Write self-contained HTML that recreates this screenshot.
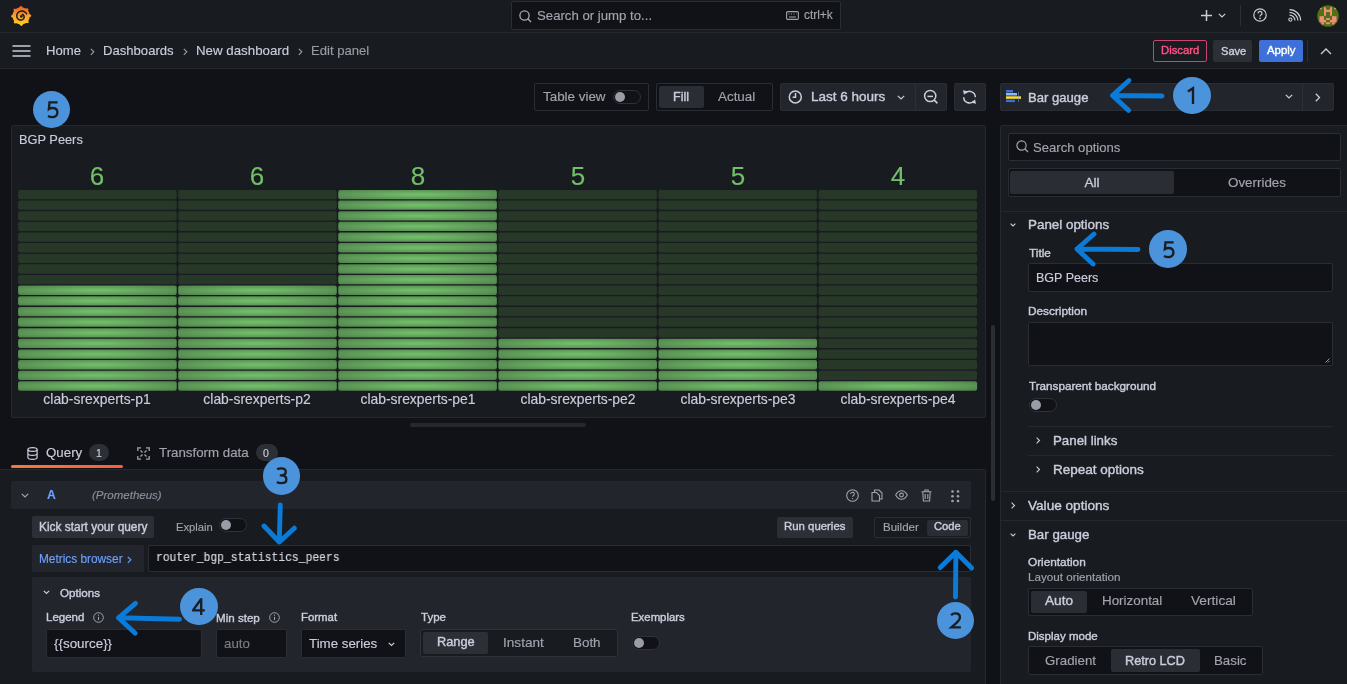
<!DOCTYPE html><html><head><meta charset="utf-8"><style>
*{box-sizing:border-box;margin:0;padding:0}
html,body{width:1347px;height:684px;overflow:hidden;background:#111217;font-family:"Liberation Sans",sans-serif;color:#ccccdc}
.a{position:absolute}
.t{position:absolute;white-space:nowrap;line-height:1;font-family:"Liberation Sans",sans-serif;will-change:transform;-webkit-text-stroke:0.15px currentColor}
.b{font-weight:700}
.mono{font-family:"Liberation Mono",monospace}
svg{position:absolute;overflow:visible}
</style></head><body><div class="a" style="left:0px;top:0px;width:1347px;height:32px;background:#181b1f"></div>
<div class="a" style="left:0px;top:32px;width:1347px;height:1px;background:#25282d"></div>
<div class="a" style="left:0px;top:33px;width:1347px;height:35px;background:#181b1f"></div>
<div class="a" style="left:0px;top:68px;width:1347px;height:1px;background:#25282d"></div>
<svg style="left:11.4px;top:4.6px;" width="21" height="22" viewBox="0 0 21 22"><defs><linearGradient id="lg" x1="0" y1="1" x2="0" y2="0"><stop offset="0" stop-color="#fbd520"/><stop offset=".55" stop-color="#f99a2a"/><stop offset="1" stop-color="#f05a28"/></linearGradient></defs>
<path fill="url(#lg)" d="M20.25 10.90 L20.06 10.12 L19.14 9.47 L18.46 8.89 L18.28 8.24 L18.05 7.61 L17.76 7.00 L17.43 6.41 L17.11 5.81 L17.32 4.74 L17.28 3.72 L16.59 3.30 L15.48 3.50 L14.59 3.57 L14.00 3.24 L13.39 2.95 L12.76 2.72 L12.11 2.54 L11.45 2.35 L10.84 1.44 L10.10 0.75 L9.32 0.94 L8.67 1.86 L8.09 2.54 L7.44 2.72 L6.81 2.95 L6.20 3.24 L5.61 3.57 L5.01 3.89 L3.94 3.68 L2.92 3.72 L2.50 4.41 L2.70 5.52 L2.77 6.41 L2.44 7.00 L2.15 7.61 L1.92 8.24 L1.74 8.89 L1.55 9.55 L0.64 10.16 L-0.05 10.90 L0.14 11.68 L1.06 12.33 L1.74 12.91 L1.92 13.56 L2.15 14.19 L2.44 14.80 L2.77 15.39 L3.09 15.99 L2.88 17.06 L2.92 18.08 L3.61 18.50 L4.72 18.30 L5.61 18.23 L6.20 18.56 L6.81 18.85 L7.44 19.08 L8.09 19.26 L8.75 19.45 L9.36 20.36 L10.10 21.05 L10.88 20.86 L11.53 19.94 L12.11 19.26 L12.76 19.08 L13.39 18.85 L14.00 18.56 L14.59 18.23 L15.19 17.91 L16.26 18.12 L17.28 18.08 L17.70 17.39 L17.50 16.28 L17.43 15.39 L17.76 14.80 L18.05 14.19 L18.28 13.56 L18.46 12.91 L18.65 12.25 L19.56 11.64Z"/>
<path fill="none" stroke="#181b1f" stroke-width="1.5" d="M15.94 9.35 L15.51 8.58 L14.98 7.90 L14.36 7.31 L13.67 6.83 L12.93 6.46 L12.15 6.20 L11.36 6.06 L10.56 6.05 L9.78 6.15 L9.04 6.35 L8.35 6.67 L7.72 7.07 L7.17 7.56 L6.70 8.11 L6.32 8.72 L6.04 9.36 L5.87 10.03 L5.79 10.70 L5.82 11.37 L5.94 12.01 L6.16 12.62 L6.45 13.18 L6.82 13.68 L7.25 14.11 L7.73 14.46 L8.25 14.74 L8.79 14.93 L9.34 15.04 L9.89 15.06 L10.43 15.00 L10.94 14.86 L11.41 14.66 L11.84 14.39 L12.21 14.07 L12.52 13.70 L12.77 13.30 L12.95 12.88 L13.07 12.45 L13.11 12.02 L13.09 11.60 L13.01 11.19 L12.87 10.82 L12.69 10.47 L12.46 10.18 L12.19 9.92 L11.90 9.72 L11.59 9.57 L11.27 9.47 L10.96 9.43 L10.65 9.43"/>
<circle cx="10.299999999999999" cy="11.4" r="1.3" fill="#181b1f"/></svg>
<div class="a" style="left:511px;top:1px;width:330px;height:29px;background:#111217;border:1px solid #2a2d33;border-radius:2px"></div>
<svg style="left:519px;top:9.5px;" width="13" height="13" viewBox="0 0 13 13"><circle cx="5.5" cy="5.5" r="4.6" fill="none" stroke="#ccccdc" stroke-width="1.3" opacity=".8"/><path d="M8.8 8.8 L12 12" stroke="#ccccdc" stroke-width="1.3" opacity=".8"/></svg>
<div class="t" style="left:537px;top:8.89px;font-size:13.2px;color:#a3a3af;">Search or jump to...</div>
<svg style="left:786px;top:11px;" width="13" height="9" viewBox="0 0 13 9"><rect x="0.6" y="0.6" width="11.8" height="7.8" rx="1.2" fill="none" stroke="#a3a3af" stroke-width="1.1"/><path d="M2.5 3h1M5 3h1M7.5 3h1M10 3h.5M3 6h7" stroke="#a3a3af" stroke-width="1"/></svg>
<div class="t" style="left:803.5px;top:10.30px;font-size:11.9px;color:#a3a3af;">ctrl+k</div>
<svg style="left:1200px;top:9px;" width="13" height="13" viewBox="0 0 13 13"><path d="M6.5 1v11M1 6.5h11" stroke="#ccccdc" stroke-width="1.5"/></svg>
<svg style="left:1218px;top:13px;" width="8" height="5" viewBox="0 0 8 5"><path d="M0.8 0.8 L4 4 L7.2 0.8" fill="none" stroke="#ccccdc" stroke-width="1.2"/></svg>
<div class="a" style="left:1240px;top:5px;width:1px;height:21px;background:#2c2f35"></div>
<svg style="left:1253px;top:8px;" width="14" height="14" viewBox="0 0 14 14"><circle cx="7" cy="7" r="6.2" fill="none" stroke="#ccccdc" stroke-width="1.2"/><path d="M5 5.4 A2 2 0 1 1 7.6 7.3 C7.1 7.6 7 7.9 7 8.5" fill="none" stroke="#ccccdc" stroke-width="1.2"/><circle cx="7" cy="10.4" r=".8" fill="#ccccdc"/></svg>
<svg style="left:1288px;top:9px;" width="14" height="13" viewBox="0 0 14 13"><circle cx="2.4" cy="10.6" r="1.6" fill="none" stroke="#ccccdc" stroke-width="1.1"/><path d="M1.5 6.2 A5.5 5.5 0 0 1 7 11.6 M1.5 3.3 A8.4 8.4 0 0 1 9.9 11.6 M1.5 0.6 A11 11 0 0 1 12.6 11.6" fill="none" stroke="#ccccdc" stroke-width="1.2"/></svg>
<svg style="left:1317px;top:4.7px" width="22" height="22" viewBox="0 0 22 22"><clipPath id="av"><circle cx="11" cy="11" r="10.8"/></clipPath><g clip-path="url(#av)"><rect width="22" height="22" fill="#4e7310"/>
<g fill="#f38b80"><rect x="7" y="2.2" width="2" height="8.6"/><rect x="13" y="2.2" width="2" height="8.6"/><rect x="9" y="4.7" width="4" height="2.3"/><rect x="2.9" y="2.7" width="1.8" height="1.6"/><rect x="17.2" y="2.7" width="1.8" height="1.6"/>
<rect x="2.5" y="11.2" width="4.5" height="6.2"/><rect x="15" y="11.2" width="4.5" height="6.2"/><rect x="4.5" y="17.4" width="2.5" height="2"/><rect x="15" y="17.4" width="2.5" height="2"/><rect x="7" y="15" width="2" height="2.4"/><rect x="13" y="15" width="2" height="2.4"/><rect x="9" y="13.2" width="4" height="1.8"/><rect x="9" y="17.4" width="4" height="1.8"/></g></g></svg>
<svg style="left:12px;top:45px;" width="19" height="12" viewBox="0 0 19 12"><path d="M0.5 1h18M0.5 6h18M0.5 11h18" stroke="#ccccdc" stroke-width="1.6"/></svg>
<div class="t" style="left:46px;top:43.90px;font-size:13.1px;color:#ccccdc;">Home</div>
<svg style="left:90px;top:47.5px;" width="5" height="8" viewBox="0 0 5 8"><path d="M0.8 0.8 L3.8 3.8 L0.8 6.8" fill="none" stroke="#a0a0ac" stroke-width="1.1"/></svg>
<div class="t" style="left:102.5px;top:43.90px;font-size:13.1px;color:#ccccdc;">Dashboards</div>
<svg style="left:182.5px;top:47.5px;" width="5" height="8" viewBox="0 0 5 8"><path d="M0.8 0.8 L3.8 3.8 L0.8 6.8" fill="none" stroke="#a0a0ac" stroke-width="1.1"/></svg>
<div class="t" style="left:195.5px;top:43.87px;font-size:13.3px;color:#ccccdc;">New dashboard</div>
<svg style="left:297.5px;top:47.5px;" width="5" height="8" viewBox="0 0 5 8"><path d="M0.8 0.8 L3.8 3.8 L0.8 6.8" fill="none" stroke="#a0a0ac" stroke-width="1.1"/></svg>
<div class="t" style="left:311px;top:43.90px;font-size:13.1px;color:#9a9aa6;">Edit panel</div>
<div class="a" style="left:1153px;top:40px;width:54px;height:22px;border:1px solid #c9446f;border-radius:2px"></div>
<div class="t" style="left:1160.7px;top:45.49px;font-size:11.3px;color:#ff5286;-webkit-text-stroke:0.40px #ff5286;">Discard</div>
<div class="a" style="left:1213px;top:40px;width:39px;height:22px;background:#2c2f35;border-radius:2px"></div>
<div class="t" style="left:1220.6px;top:45.52px;font-size:11.1px;color:#ccccdc;-webkit-text-stroke:0.40px #ccccdc;">Save</div>
<div class="a" style="left:1259px;top:40px;width:44px;height:22px;background:#3d71d9;border-radius:2px"></div>
<div class="t" style="left:1266.8px;top:45.48px;font-size:11.4px;color:#ffffff;-webkit-text-stroke:0.40px #ffffff;">Apply</div>
<div class="a" style="left:1307px;top:40px;width:1px;height:22px;background:#2c2f35"></div>
<svg style="left:1320px;top:48px;" width="12" height="7" viewBox="0 0 12 7"><path d="M1 6 L6 1 L11 6" fill="none" stroke="#ccccdc" stroke-width="1.4"/></svg>
<div class="a" style="left:534px;top:83px;width:115px;height:28px;border:1px solid #2a2d33;border-radius:2px"></div>
<div class="t" style="left:542.5px;top:89.86px;font-size:13.4px;color:#a3a3af;">Table view</div>
<div class="a" style="left:613px;top:90px;width:28px;height:14px;border:1px solid #2f3238;border-radius:7px;background:#111217"></div>
<div class="a" style="left:615px;top:92px;width:10px;height:10px;background:#9c9ca8;border-radius:50%"></div>
<div class="a" style="left:656px;top:83px;width:117px;height:28px;border:1px solid #2a2d33;border-radius:2px"></div>
<div class="a" style="left:659px;top:86px;width:45px;height:22px;background:#2a2d33;border-radius:2px"></div>
<div class="t" style="left:673px;top:90.50px;font-size:12.5px;color:#ccccdc;-webkit-text-stroke:0.40px #ccccdc;">Fill</div>
<div class="t" style="left:717.5px;top:89.86px;font-size:13.4px;color:#a3a3af;">Actual</div>
<div class="a" style="left:779.5px;top:83px;width:167.5px;height:28px;background:#22252b;border:1px solid #2a2d33;border-radius:2px"></div>
<div class="a" style="left:915px;top:83px;width:1px;height:28px;background:#2c2f35"></div>
<svg style="left:788px;top:90px;" width="15" height="15" viewBox="0 0 15 15"><circle cx="7.3" cy="6.9" r="6" fill="none" stroke="#ccccdc" stroke-width="1.5"/><path d="M7.5 2.9 V7.2 H4.6" fill="none" stroke="#ccccdc" stroke-width="1.5"/></svg>
<div class="t" style="left:810.6px;top:90.34px;font-size:13.5px;color:#ccccdc;-webkit-text-stroke:0.40px #ccccdc;">Last 6 hours</div>
<svg style="left:897px;top:94.5px;" width="8" height="5" viewBox="0 0 8 5"><path d="M0.8 0.8 L4 4 L7.2 0.8" fill="none" stroke="#ccccdc" stroke-width="1.2"/></svg>
<svg style="left:922px;top:88px;" width="17" height="17" viewBox="0 0 17 17"><circle cx="8.2" cy="8" r="5.6" fill="none" stroke="#ccccdc" stroke-width="1.5"/><path d="M5.4 8.4 H11" stroke="#ccccdc" stroke-width="1.5"/><path d="M12.3 12.2 L15 14.8" stroke="#ccccdc" stroke-width="1.6" stroke-linecap="round"/></svg>
<div class="a" style="left:954px;top:83px;width:32px;height:28px;background:#22252b;border:1px solid #2a2d33;border-radius:2px"></div>
<svg style="left:962px;top:89px;" width="16" height="16" viewBox="0 0 16 16"><path d="M3.4 4.1 A5.8 5.8 0 0 1 13.3 8.2 M1.7 8.2 A5.8 5.8 0 0 0 11.6 12.3" fill="none" stroke="#ccccdc" stroke-width="1.5"/><path d="M1 1.2 L5.6 2.2 L2 5.8 Z M14 14.8 L9.4 13.8 L13 10.2 Z" fill="#ccccdc"/></svg>
<div class="a" style="left:1000px;top:83px;width:334px;height:28px;background:#22252b;border:1px solid #2a2d33;border-radius:2px"></div>
<div class="a" style="left:1302px;top:83px;width:1px;height:28px;background:#2c2f35"></div>
<svg style="left:1006px;top:90px;" width="17" height="15" viewBox="0 0 17 15"><rect x="0" y="0" width="7" height="2.5" fill="#3871dc"/><rect x="0" y="3" width="11" height="2.5" fill="#8ab8ff"/><rect x="0" y="6.3" width="15" height="2.5" fill="#fade2a"/><rect x="0" y="9.6" width="9" height="2.5" fill="#3871dc"/><rect x="12" y="2" width="1" height="10" fill="#6e9fff" opacity=".5"/></svg>
<div class="t" style="left:1028.4px;top:90.70px;font-size:13.1px;color:#ccccdc;-webkit-text-stroke:0.40px #ccccdc;">Bar gauge</div>
<svg style="left:1284.5px;top:94px;" width="8" height="5" viewBox="0 0 8 5"><path d="M0.8 0.8 L4 4 L7.2 0.8" fill="none" stroke="#ccccdc" stroke-width="1.2"/></svg>
<svg style="left:1315px;top:93px;" width="6" height="9" viewBox="0 0 6 9"><path d="M0.8 0.8 L4.5 4.5 L0.8 8.2" fill="none" stroke="#ccccdc" stroke-width="1.3"/></svg>
<div class="a" style="left:11px;top:125px;width:975px;height:293px;background:#181b1f;border:1px solid #25282e;border-radius:2px"></div>
<div class="t" style="left:18.6px;top:133.55px;font-size:12.8px;color:#ccccdc;">BGP Peers</div>
<div class="t" style="left:57.40px;width:80px;text-align:center;top:163px;font-size:26px;color:#73bf69">6</div>
<div class="t" style="left:17.40px;width:160px;text-align:center;top:393.3px;font-size:13.9px;color:#ccccdc">clab-srexperts-p1</div>
<div class="t" style="left:217.48px;width:80px;text-align:center;top:163px;font-size:26px;color:#73bf69">6</div>
<div class="t" style="left:177.48px;width:160px;text-align:center;top:393.3px;font-size:13.9px;color:#ccccdc">clab-srexperts-p2</div>
<div class="t" style="left:377.56px;width:80px;text-align:center;top:163px;font-size:26px;color:#73bf69">8</div>
<div class="t" style="left:337.56px;width:160px;text-align:center;top:393.3px;font-size:13.9px;color:#ccccdc">clab-srexperts-pe1</div>
<div class="t" style="left:537.64px;width:80px;text-align:center;top:163px;font-size:26px;color:#73bf69">5</div>
<div class="t" style="left:497.64px;width:160px;text-align:center;top:393.3px;font-size:13.9px;color:#ccccdc">clab-srexperts-pe2</div>
<div class="t" style="left:697.72px;width:80px;text-align:center;top:163px;font-size:26px;color:#73bf69">5</div>
<div class="t" style="left:657.72px;width:160px;text-align:center;top:393.3px;font-size:13.9px;color:#ccccdc">clab-srexperts-pe3</div>
<div class="t" style="left:857.80px;width:80px;text-align:center;top:163px;font-size:26px;color:#73bf69">4</div>
<div class="t" style="left:817.80px;width:160px;text-align:center;top:393.3px;font-size:13.9px;color:#ccccdc">clab-srexperts-pe4</div>
<svg style="left:0;top:0" width="1000" height="420" viewBox="0 0 1000 420"><defs><radialGradient id="lit" cx=".5" cy=".5" r=".707"><stop offset=".1" stop-color="#70bc68"/><stop offset="1" stop-color="#4f7f4b"/></radialGradient></defs><rect x="18.10" y="189.90" width="158.6" height="9.3" rx="2" fill="#283828"/><rect x="18.10" y="200.54" width="158.6" height="9.3" rx="2" fill="#283828"/><rect x="18.10" y="211.17" width="158.6" height="9.3" rx="2" fill="#283828"/><rect x="18.10" y="221.81" width="158.6" height="9.3" rx="2" fill="#283828"/><rect x="18.10" y="232.44" width="158.6" height="9.3" rx="2" fill="#283828"/><rect x="18.10" y="243.08" width="158.6" height="9.3" rx="2" fill="#283828"/><rect x="18.10" y="253.72" width="158.6" height="9.3" rx="2" fill="#283828"/><rect x="18.10" y="264.35" width="158.6" height="9.3" rx="2" fill="#283828"/><rect x="18.10" y="274.99" width="158.6" height="9.3" rx="2" fill="#283828"/><rect x="18.10" y="285.62" width="158.6" height="9.3" rx="2" fill="url(#lit)"/><rect x="18.10" y="296.26" width="158.6" height="9.3" rx="2" fill="url(#lit)"/><rect x="18.10" y="306.90" width="158.6" height="9.3" rx="2" fill="url(#lit)"/><rect x="18.10" y="317.53" width="158.6" height="9.3" rx="2" fill="url(#lit)"/><rect x="18.10" y="328.17" width="158.6" height="9.3" rx="2" fill="url(#lit)"/><rect x="18.10" y="338.80" width="158.6" height="9.3" rx="2" fill="url(#lit)"/><rect x="18.10" y="349.44" width="158.6" height="9.3" rx="2" fill="url(#lit)"/><rect x="18.10" y="360.08" width="158.6" height="9.3" rx="2" fill="url(#lit)"/><rect x="18.10" y="370.71" width="158.6" height="9.3" rx="2" fill="url(#lit)"/><rect x="18.10" y="381.35" width="158.6" height="9.3" rx="2" fill="url(#lit)"/><rect x="178.18" y="189.90" width="158.6" height="9.3" rx="2" fill="#283828"/><rect x="178.18" y="200.54" width="158.6" height="9.3" rx="2" fill="#283828"/><rect x="178.18" y="211.17" width="158.6" height="9.3" rx="2" fill="#283828"/><rect x="178.18" y="221.81" width="158.6" height="9.3" rx="2" fill="#283828"/><rect x="178.18" y="232.44" width="158.6" height="9.3" rx="2" fill="#283828"/><rect x="178.18" y="243.08" width="158.6" height="9.3" rx="2" fill="#283828"/><rect x="178.18" y="253.72" width="158.6" height="9.3" rx="2" fill="#283828"/><rect x="178.18" y="264.35" width="158.6" height="9.3" rx="2" fill="#283828"/><rect x="178.18" y="274.99" width="158.6" height="9.3" rx="2" fill="#283828"/><rect x="178.18" y="285.62" width="158.6" height="9.3" rx="2" fill="url(#lit)"/><rect x="178.18" y="296.26" width="158.6" height="9.3" rx="2" fill="url(#lit)"/><rect x="178.18" y="306.90" width="158.6" height="9.3" rx="2" fill="url(#lit)"/><rect x="178.18" y="317.53" width="158.6" height="9.3" rx="2" fill="url(#lit)"/><rect x="178.18" y="328.17" width="158.6" height="9.3" rx="2" fill="url(#lit)"/><rect x="178.18" y="338.80" width="158.6" height="9.3" rx="2" fill="url(#lit)"/><rect x="178.18" y="349.44" width="158.6" height="9.3" rx="2" fill="url(#lit)"/><rect x="178.18" y="360.08" width="158.6" height="9.3" rx="2" fill="url(#lit)"/><rect x="178.18" y="370.71" width="158.6" height="9.3" rx="2" fill="url(#lit)"/><rect x="178.18" y="381.35" width="158.6" height="9.3" rx="2" fill="url(#lit)"/><rect x="338.26" y="189.90" width="158.6" height="9.3" rx="2" fill="url(#lit)"/><rect x="338.26" y="200.54" width="158.6" height="9.3" rx="2" fill="url(#lit)"/><rect x="338.26" y="211.17" width="158.6" height="9.3" rx="2" fill="url(#lit)"/><rect x="338.26" y="221.81" width="158.6" height="9.3" rx="2" fill="url(#lit)"/><rect x="338.26" y="232.44" width="158.6" height="9.3" rx="2" fill="url(#lit)"/><rect x="338.26" y="243.08" width="158.6" height="9.3" rx="2" fill="url(#lit)"/><rect x="338.26" y="253.72" width="158.6" height="9.3" rx="2" fill="url(#lit)"/><rect x="338.26" y="264.35" width="158.6" height="9.3" rx="2" fill="url(#lit)"/><rect x="338.26" y="274.99" width="158.6" height="9.3" rx="2" fill="url(#lit)"/><rect x="338.26" y="285.62" width="158.6" height="9.3" rx="2" fill="url(#lit)"/><rect x="338.26" y="296.26" width="158.6" height="9.3" rx="2" fill="url(#lit)"/><rect x="338.26" y="306.90" width="158.6" height="9.3" rx="2" fill="url(#lit)"/><rect x="338.26" y="317.53" width="158.6" height="9.3" rx="2" fill="url(#lit)"/><rect x="338.26" y="328.17" width="158.6" height="9.3" rx="2" fill="url(#lit)"/><rect x="338.26" y="338.80" width="158.6" height="9.3" rx="2" fill="url(#lit)"/><rect x="338.26" y="349.44" width="158.6" height="9.3" rx="2" fill="url(#lit)"/><rect x="338.26" y="360.08" width="158.6" height="9.3" rx="2" fill="url(#lit)"/><rect x="338.26" y="370.71" width="158.6" height="9.3" rx="2" fill="url(#lit)"/><rect x="338.26" y="381.35" width="158.6" height="9.3" rx="2" fill="url(#lit)"/><rect x="498.34" y="189.90" width="158.6" height="9.3" rx="2" fill="#283828"/><rect x="498.34" y="200.54" width="158.6" height="9.3" rx="2" fill="#283828"/><rect x="498.34" y="211.17" width="158.6" height="9.3" rx="2" fill="#283828"/><rect x="498.34" y="221.81" width="158.6" height="9.3" rx="2" fill="#283828"/><rect x="498.34" y="232.44" width="158.6" height="9.3" rx="2" fill="#283828"/><rect x="498.34" y="243.08" width="158.6" height="9.3" rx="2" fill="#283828"/><rect x="498.34" y="253.72" width="158.6" height="9.3" rx="2" fill="#283828"/><rect x="498.34" y="264.35" width="158.6" height="9.3" rx="2" fill="#283828"/><rect x="498.34" y="274.99" width="158.6" height="9.3" rx="2" fill="#283828"/><rect x="498.34" y="285.62" width="158.6" height="9.3" rx="2" fill="#283828"/><rect x="498.34" y="296.26" width="158.6" height="9.3" rx="2" fill="#283828"/><rect x="498.34" y="306.90" width="158.6" height="9.3" rx="2" fill="#283828"/><rect x="498.34" y="317.53" width="158.6" height="9.3" rx="2" fill="#283828"/><rect x="498.34" y="328.17" width="158.6" height="9.3" rx="2" fill="#283828"/><rect x="498.34" y="338.80" width="158.6" height="9.3" rx="2" fill="url(#lit)"/><rect x="498.34" y="349.44" width="158.6" height="9.3" rx="2" fill="url(#lit)"/><rect x="498.34" y="360.08" width="158.6" height="9.3" rx="2" fill="url(#lit)"/><rect x="498.34" y="370.71" width="158.6" height="9.3" rx="2" fill="url(#lit)"/><rect x="498.34" y="381.35" width="158.6" height="9.3" rx="2" fill="url(#lit)"/><rect x="658.42" y="189.90" width="158.6" height="9.3" rx="2" fill="#283828"/><rect x="658.42" y="200.54" width="158.6" height="9.3" rx="2" fill="#283828"/><rect x="658.42" y="211.17" width="158.6" height="9.3" rx="2" fill="#283828"/><rect x="658.42" y="221.81" width="158.6" height="9.3" rx="2" fill="#283828"/><rect x="658.42" y="232.44" width="158.6" height="9.3" rx="2" fill="#283828"/><rect x="658.42" y="243.08" width="158.6" height="9.3" rx="2" fill="#283828"/><rect x="658.42" y="253.72" width="158.6" height="9.3" rx="2" fill="#283828"/><rect x="658.42" y="264.35" width="158.6" height="9.3" rx="2" fill="#283828"/><rect x="658.42" y="274.99" width="158.6" height="9.3" rx="2" fill="#283828"/><rect x="658.42" y="285.62" width="158.6" height="9.3" rx="2" fill="#283828"/><rect x="658.42" y="296.26" width="158.6" height="9.3" rx="2" fill="#283828"/><rect x="658.42" y="306.90" width="158.6" height="9.3" rx="2" fill="#283828"/><rect x="658.42" y="317.53" width="158.6" height="9.3" rx="2" fill="#283828"/><rect x="658.42" y="328.17" width="158.6" height="9.3" rx="2" fill="#283828"/><rect x="658.42" y="338.80" width="158.6" height="9.3" rx="2" fill="url(#lit)"/><rect x="658.42" y="349.44" width="158.6" height="9.3" rx="2" fill="url(#lit)"/><rect x="658.42" y="360.08" width="158.6" height="9.3" rx="2" fill="url(#lit)"/><rect x="658.42" y="370.71" width="158.6" height="9.3" rx="2" fill="url(#lit)"/><rect x="658.42" y="381.35" width="158.6" height="9.3" rx="2" fill="url(#lit)"/><rect x="818.50" y="189.90" width="158.6" height="9.3" rx="2" fill="#283828"/><rect x="818.50" y="200.54" width="158.6" height="9.3" rx="2" fill="#283828"/><rect x="818.50" y="211.17" width="158.6" height="9.3" rx="2" fill="#283828"/><rect x="818.50" y="221.81" width="158.6" height="9.3" rx="2" fill="#283828"/><rect x="818.50" y="232.44" width="158.6" height="9.3" rx="2" fill="#283828"/><rect x="818.50" y="243.08" width="158.6" height="9.3" rx="2" fill="#283828"/><rect x="818.50" y="253.72" width="158.6" height="9.3" rx="2" fill="#283828"/><rect x="818.50" y="264.35" width="158.6" height="9.3" rx="2" fill="#283828"/><rect x="818.50" y="274.99" width="158.6" height="9.3" rx="2" fill="#283828"/><rect x="818.50" y="285.62" width="158.6" height="9.3" rx="2" fill="#283828"/><rect x="818.50" y="296.26" width="158.6" height="9.3" rx="2" fill="#283828"/><rect x="818.50" y="306.90" width="158.6" height="9.3" rx="2" fill="#283828"/><rect x="818.50" y="317.53" width="158.6" height="9.3" rx="2" fill="#283828"/><rect x="818.50" y="328.17" width="158.6" height="9.3" rx="2" fill="#283828"/><rect x="818.50" y="338.80" width="158.6" height="9.3" rx="2" fill="#283828"/><rect x="818.50" y="349.44" width="158.6" height="9.3" rx="2" fill="#283828"/><rect x="818.50" y="360.08" width="158.6" height="9.3" rx="2" fill="#283828"/><rect x="818.50" y="370.71" width="158.6" height="9.3" rx="2" fill="#283828"/><rect x="818.50" y="381.35" width="158.6" height="9.3" rx="2" fill="url(#lit)"/></svg>
<div class="a" style="left:410px;top:422.8px;width:176px;height:4.2px;background:#26282d;border-radius:2px"></div>
<div class="a" style="left:991px;top:325px;width:3.5px;height:176px;background:#2c2e34;border-radius:2px"></div>
<svg style="left:26.5px;top:447px;" width="11" height="13" viewBox="0 0 11 13"><ellipse cx="5.5" cy="2.5" rx="4.6" ry="1.9" fill="none" stroke="#ccccdc" stroke-width="1.2"/><path d="M0.9 2.5 V10.5 A4.6 1.9 0 0 0 10.1 10.5 V2.5 M0.9 6.5 A4.6 1.9 0 0 0 10.1 6.5" fill="none" stroke="#ccccdc" stroke-width="1.2"/></svg>
<div class="t" style="left:46px;top:446.37px;font-size:13.3px;color:#ccccdc;">Query</div>
<div class="a" style="left:89px;top:444px;width:19.5px;height:17px;background:#2c2f35;border-radius:9px"></div>
<div class="t" style="left:95.5px;top:448.32px;font-size:10.5px;color:#ccccdc;">1</div>
<div class="a" style="left:10.5px;top:465px;width:112px;height:3px;background:linear-gradient(90deg,#f77a3a,#f55f3e);border-radius:2px"></div>
<svg style="left:137px;top:447px;" width="13" height="13" viewBox="0 0 13 13"><path d="M0.8 4 V0.8 H4 M9 0.8 H12.2 V4 M12.2 9 V12.2 H9 M4 12.2 H0.8 V9" fill="none" stroke="#a3a3af" stroke-width="1.3"/><path d="M3.5 3.5 L5.5 5.5 M9.5 3.5 L7.5 5.5 M3.5 9.5 L5.5 7.5 M9.5 9.5 L7.5 7.5" stroke="#a3a3af" stroke-width="1.2"/></svg>
<div class="t" style="left:158.8px;top:446.37px;font-size:13.3px;color:#a3a3af;">Transform data</div>
<div class="a" style="left:256px;top:444px;width:21.5px;height:17px;background:#2c2f35;border-radius:9px"></div>
<div class="t" style="left:263px;top:448.32px;font-size:10.5px;color:#ccccdc;">0</div>
<div class="a" style="left:-2px;top:469px;width:988px;height:230px;background:#181b1f;border:1px solid #25282e;border-radius:2px"></div>
<div class="a" style="left:11px;top:481px;width:960px;height:28px;background:#22252b;border-radius:2px"></div>
<svg style="left:21px;top:493px;" width="8" height="5" viewBox="0 0 8 5"><path d="M0.8 0.8 L4 4 L7.2 0.8" fill="none" stroke="#a3a3af" stroke-width="1.2"/></svg>
<div class="t" style="left:46.6px;top:489.05px;font-size:12.2px;color:#6e9fff;font-weight:700;">A</div>
<div class="t" style="left:92.4px;top:489.96px;font-size:11.5px;color:#8e8e9c;font-style:italic">(Prometheus)</div>
<svg style="left:845.5px;top:488.7px;" width="13" height="13" viewBox="0 0 13 13"><circle cx="6.5" cy="6.5" r="5.8" fill="none" stroke="#a3a3af" stroke-width="1.1"/><path d="M4.7 5 A1.8 1.8 0 1 1 7 6.7 C6.6 7 6.5 7.2 6.5 7.8" fill="none" stroke="#a3a3af" stroke-width="1.1"/><circle cx="6.5" cy="9.6" r=".7" fill="#a3a3af"/></svg>
<svg style="left:870.5px;top:488.7px;" width="12" height="13" viewBox="0 0 12 13"><path d="M3.5 3.2 V1 H8 L11 4 V10 H8.5" fill="none" stroke="#a3a3af" stroke-width="1.1"/><path d="M1 3.5 H5.5 L8.5 6.5 V12 H1 Z" fill="none" stroke="#a3a3af" stroke-width="1.1"/></svg>
<svg style="left:895px;top:490.2px;" width="13" height="10" viewBox="0 0 13 10"><path d="M0.7 5 C2.5 1.5 4.5 0.7 6.5 0.7 C8.5 0.7 10.5 1.5 12.3 5 C10.5 8.5 8.5 9.3 6.5 9.3 C4.5 9.3 2.5 8.5 0.7 5 Z" fill="none" stroke="#a3a3af" stroke-width="1.1"/><circle cx="6.5" cy="5" r="1.9" fill="none" stroke="#a3a3af" stroke-width="1.1"/></svg>
<svg style="left:920.5px;top:488.7px;" width="11" height="13" viewBox="0 0 11 13"><path d="M0.5 2.8 H10.5 M3.8 2.8 V1 H7.2 V2.8 M1.8 2.8 L2.4 12 H8.6 L9.2 2.8 M4.2 5 V10 M6.8 5 V10" fill="none" stroke="#a3a3af" stroke-width="1.1"/></svg>
<svg style="left:951px;top:490px;" width="9" height="13" viewBox="0 0 9 13"><g fill="#a3a3af"><circle cx="1.5" cy="1.5" r="1.3"/><circle cx="7" cy="1.5" r="1.3"/><circle cx="1.5" cy="6.3" r="1.3"/><circle cx="7" cy="6.3" r="1.3"/><circle cx="1.5" cy="11" r="1.3"/><circle cx="7" cy="11" r="1.3"/></g></svg>
<div class="a" style="left:32px;top:516px;width:122px;height:22px;background:#2c2f35;border-radius:2px"></div>
<div class="t" style="left:38.7px;top:522.10px;font-size:11.9px;color:#ccccdc;-webkit-text-stroke:0.40px #ccccdc;">Kick start your query</div>
<div class="t" style="left:175.6px;top:521.71px;font-size:11.2px;color:#a3a3af;">Explain</div>
<div class="a" style="left:219px;top:518px;width:28px;height:14px;border:1px solid #2f3238;border-radius:7px;background:#111217"></div>
<div class="a" style="left:221px;top:520px;width:10px;height:10px;background:#9c9ca8;border-radius:50%"></div>
<div class="a" style="left:777px;top:516.5px;width:76px;height:21px;background:#2c2f35;border-radius:2px"></div>
<div class="t" style="left:784px;top:521.18px;font-size:11.4px;color:#ccccdc;-webkit-text-stroke:0.40px #ccccdc;">Run queries</div>
<div class="a" style="left:873.5px;top:517px;width:97px;height:21px;border:1px solid #2a2d33;border-radius:2px"></div>
<div class="a" style="left:927px;top:519.5px;width:41px;height:16px;background:#2a2d33;border-radius:2px"></div>
<div class="t" style="left:883.3px;top:521.66px;font-size:11.5px;color:#a3a3af;">Builder</div>
<div class="t" style="left:933.6px;top:521.21px;font-size:11.2px;color:#ccccdc;-webkit-text-stroke:0.40px #ccccdc;">Code</div>
<div class="a" style="left:32px;top:545px;width:112px;height:27px;background:#22252b;border-radius:2px"></div>
<div class="t" style="left:38.7px;top:553.60px;font-size:11.85px;color:#6e9fff;">Metrics browser</div>
<svg style="left:126.5px;top:556px;" width="5" height="8" viewBox="0 0 5 8"><path d="M0.8 0.8 L3.8 3.8 L0.8 6.8" fill="none" stroke="#6e9fff" stroke-width="1.2"/></svg>
<div class="a" style="left:148px;top:544.5px;width:823px;height:27.5px;background:#111217;border:1px solid #2a2d33;border-radius:2px"></div>
<div class="t mono" style="left:155.8px;top:552px;font-size:12.8px;color:#d4d4de;transform:scaleX(0.885);transform-origin:0 0;-webkit-text-stroke:0.2px #d4d4de">router_bgp_statistics_peers</div>
<div class="a" style="left:32px;top:577px;width:939px;height:95px;background:#22252b;border-radius:2px"></div>
<svg style="left:42.5px;top:590px;" width="7" height="5" viewBox="0 0 7 5"><path d="M0.8 0.8 L3.5 3.5 L6.2 0.8" fill="none" stroke="#ccccdc" stroke-width="1.2"/></svg>
<div class="t" style="left:60px;top:586.64px;font-size:11.6px;color:#ccccdc;-webkit-text-stroke:0.40px #ccccdc;">Options</div>
<div class="t" style="left:46px;top:611.66px;font-size:11.5px;color:#ccccdc;-webkit-text-stroke:0.40px #ccccdc;">Legend</div>
<svg style="left:92.5px;top:612px;" width="11" height="11" viewBox="0 0 11 11"><circle cx="5.5" cy="5.5" r="4.8" fill="none" stroke="#a3a3af" stroke-width="1"/><path d="M5.5 4.8 V8" stroke="#a3a3af" stroke-width="1.1"/><circle cx="5.5" cy="3.2" r=".6" fill="#a3a3af"/></svg>
<div class="a" style="left:46px;top:629px;width:156px;height:29px;background:#111217;border:1px solid #2a2d33;border-radius:2px"></div>
<div class="t" style="left:53.5px;top:636.86px;font-size:13.4px;color:#ccccdc;">{{source}}</div>
<div class="t" style="left:216px;top:611.64px;font-size:11.6px;color:#ccccdc;-webkit-text-stroke:0.40px #ccccdc;">Min step</div>
<svg style="left:268.5px;top:612px;" width="11" height="11" viewBox="0 0 11 11"><circle cx="5.5" cy="5.5" r="4.8" fill="none" stroke="#a3a3af" stroke-width="1"/><path d="M5.5 4.8 V8" stroke="#a3a3af" stroke-width="1.1"/><circle cx="5.5" cy="3.2" r=".6" fill="#a3a3af"/></svg>
<div class="a" style="left:216px;top:629px;width:70.5px;height:29px;background:#111217;border:1px solid #2a2d33;border-radius:2px"></div>
<div class="t" style="left:223.5px;top:636.87px;font-size:13.3px;color:#7d7d89;">auto</div>
<div class="t" style="left:300.6px;top:611.68px;font-size:11.4px;color:#ccccdc;-webkit-text-stroke:0.40px #ccccdc;">Format</div>
<div class="a" style="left:300.6px;top:629px;width:105px;height:29px;background:#111217;border:1px solid #2a2d33;border-radius:2px"></div>
<div class="t" style="left:309px;top:636.87px;font-size:13.3px;color:#ccccdc;">Time series</div>
<svg style="left:388px;top:641.5px;" width="7" height="5" viewBox="0 0 7 5"><path d="M0.8 0.8 L3.5 3.5 L6.2 0.8" fill="none" stroke="#ccccdc" stroke-width="1.2"/></svg>
<div class="t" style="left:420.5px;top:611.66px;font-size:11.5px;color:#ccccdc;-webkit-text-stroke:0.40px #ccccdc;">Type</div>
<div class="a" style="left:420px;top:629px;width:197.5px;height:28px;border:1px solid #2f3238;border-radius:2px;background:#181b1f"></div>
<div class="a" style="left:423px;top:632px;width:65px;height:22px;background:#2c2f35;border-radius:2px"></div>
<div class="t" style="left:437px;top:636.45px;font-size:12.8px;color:#ccccdc;-webkit-text-stroke:0.40px #ccccdc;">Range</div>
<div class="t" style="left:503px;top:635.82px;font-size:13.6px;color:#a3a3af;">Instant</div>
<div class="t" style="left:572.8px;top:635.86px;font-size:13.4px;color:#a3a3af;">Both</div>
<div class="t" style="left:631px;top:611.68px;font-size:11.4px;color:#ccccdc;-webkit-text-stroke:0.40px #ccccdc;">Exemplars</div>
<div class="a" style="left:632px;top:636px;width:28px;height:14px;border:1px solid #2f3238;border-radius:7px;background:#111217"></div>
<div class="a" style="left:634px;top:638px;width:10px;height:10px;background:#9c9ca8;border-radius:50%"></div>
<div class="a" style="left:1000px;top:125px;width:360px;height:570px;background:#181b1f;border:1px solid #25282e;border-radius:2px"></div>
<div class="a" style="left:1007.5px;top:133px;width:333px;height:28px;background:#111217;border:1px solid #2a2d33;border-radius:2px"></div>
<svg style="left:1015.5px;top:139.5px;" width="13" height="13" viewBox="0 0 13 13"><circle cx="5.5" cy="5.5" r="4.6" fill="none" stroke="#a3a3af" stroke-width="1.2"/><path d="M8.8 8.8 L12 12" stroke="#a3a3af" stroke-width="1.3"/></svg>
<div class="t" style="left:1033px;top:140.90px;font-size:13.1px;color:#a3a3af;">Search options</div>
<div class="a" style="left:1007.5px;top:168px;width:333px;height:29px;border:1px solid #2a2d33;border-radius:2px;background:#111217"></div>
<div class="a" style="left:1010px;top:171px;width:164px;height:23px;background:#2a2d33;border-radius:2px"></div>
<div class="t" style="left:1010px;width:164px;text-align:center;top:176px;font-size:13.6px;color:#ccccdc;-webkit-text-stroke:0.3px #ccccdc">All</div>
<div class="t" style="left:1174px;width:166px;text-align:center;top:176px;font-size:13.4px;color:#a3a3af">Overrides</div>
<div class="a" style="left:1000px;top:211px;width:347px;height:1px;background:#25282e"></div>
<svg style="left:1010px;top:222.5px;" width="6" height="4" viewBox="0 0 6 4"><path d="M0.6 0.6 L3 3 L5.4 0.6" fill="none" stroke="#ccccdc" stroke-width="1.1"/></svg>
<div class="t" style="left:1028.4px;top:217.66px;font-size:13.4px;color:#ccccdc;-webkit-text-stroke:0.40px #ccccdc;">Panel options</div>
<div class="t" style="left:1029px;top:248.11px;font-size:11.8px;color:#ccccdc;-webkit-text-stroke:0.40px #ccccdc;">Title</div>
<div class="a" style="left:1028.4px;top:263px;width:305px;height:28.5px;background:#111217;border:1px solid #2a2d33;border-radius:2px"></div>
<div class="t" style="left:1036.3px;top:272.00px;font-size:12.5px;color:#ccccdc;">BGP Peers</div>
<div class="t" style="left:1028.4px;top:305.51px;font-size:11.8px;color:#ccccdc;-webkit-text-stroke:0.40px #ccccdc;">Description</div>
<div class="a" style="left:1028.4px;top:322.4px;width:305px;height:44px;background:#111217;border:1px solid #2a2d33;border-radius:2px"></div>
<svg style="left:1325px;top:358px;" width="5" height="5" viewBox="0 0 5 5"><path d="M4.5 0.5 L0.5 4.5 M4.5 2.8 L2.8 4.5" stroke="#a3a3af" stroke-width=".9"/></svg>
<div class="t" style="left:1028.7px;top:379.93px;font-size:11.7px;color:#ccccdc;-webkit-text-stroke:0.40px #ccccdc;">Transparent background</div>
<div class="a" style="left:1028.7px;top:397.5px;width:28px;height:14px;border:1px solid #2f3238;border-radius:7px;background:#111217"></div>
<div class="a" style="left:1030.7px;top:399.5px;width:10px;height:10px;background:#9c9ca8;border-radius:50%"></div>
<div class="a" style="left:1028px;top:426px;width:305px;height:1px;background:#25282e"></div>
<svg style="left:1035.5px;top:437px;" width="5" height="7" viewBox="0 0 5 7"><path d="M0.6 0.6 L3.5 3.5 L0.6 6.4" fill="none" stroke="#ccccdc" stroke-width="1.1"/></svg>
<div class="t" style="left:1052.7px;top:434.37px;font-size:13.3px;color:#ccccdc;-webkit-text-stroke:0.40px #ccccdc;">Panel links</div>
<div class="a" style="left:1028px;top:455px;width:305px;height:1px;background:#25282e"></div>
<svg style="left:1035.5px;top:466px;" width="5" height="7" viewBox="0 0 5 7"><path d="M0.6 0.6 L3.5 3.5 L0.6 6.4" fill="none" stroke="#ccccdc" stroke-width="1.1"/></svg>
<div class="t" style="left:1052.7px;top:463.04px;font-size:13.5px;color:#ccccdc;-webkit-text-stroke:0.40px #ccccdc;">Repeat options</div>
<div class="a" style="left:1000px;top:491px;width:347px;height:1px;background:#25282e"></div>
<svg style="left:1011px;top:502px;" width="5" height="7" viewBox="0 0 5 7"><path d="M0.6 0.6 L3.5 3.5 L0.6 6.4" fill="none" stroke="#ccccdc" stroke-width="1.1"/></svg>
<div class="t" style="left:1028.3px;top:498.52px;font-size:13.6px;color:#ccccdc;-webkit-text-stroke:0.40px #ccccdc;">Value options</div>
<div class="a" style="left:1000px;top:520px;width:347px;height:1px;background:#25282e"></div>
<svg style="left:1010px;top:533px;" width="6" height="4" viewBox="0 0 6 4"><path d="M0.6 0.6 L3 3 L5.4 0.6" fill="none" stroke="#ccccdc" stroke-width="1.1"/></svg>
<div class="t" style="left:1028.3px;top:527.87px;font-size:13.3px;color:#ccccdc;-webkit-text-stroke:0.40px #ccccdc;">Bar gauge</div>
<div class="t" style="left:1028.4px;top:557.31px;font-size:11.8px;color:#ccccdc;-webkit-text-stroke:0.40px #ccccdc;">Orientation</div>
<div class="t" style="left:1028.4px;top:570.84px;font-size:11.65px;color:#a3a3af;">Layout orientation</div>
<div class="a" style="left:1028.4px;top:588px;width:225px;height:27.5px;border:1px solid #2a2d33;border-radius:2px;background:#111217"></div>
<div class="a" style="left:1031px;top:590.5px;width:56px;height:22px;background:#2a2d33;border-radius:2px"></div>
<div class="t" style="left:1045px;top:594.32px;font-size:13.6px;color:#ccccdc;-webkit-text-stroke:0.40px #ccccdc;">Auto</div>
<div class="t" style="left:1101.6px;top:594.36px;font-size:13.4px;color:#a3a3af;">Horizontal</div>
<div class="t" style="left:1191px;top:594.31px;font-size:13.7px;color:#a3a3af;">Vertical</div>
<div class="t" style="left:1028.4px;top:630.96px;font-size:11.5px;color:#ccccdc;-webkit-text-stroke:0.40px #ccccdc;">Display mode</div>
<div class="a" style="left:1028.4px;top:646.3px;width:234.5px;height:28.5px;border:1px solid #2a2d33;border-radius:2px;background:#111217"></div>
<div class="a" style="left:1110.8px;top:649px;width:89px;height:23px;background:#2a2d33;border-radius:2px"></div>
<div class="t" style="left:1045px;top:653.87px;font-size:13.3px;color:#a3a3af;">Gradient</div>
<div class="t" style="left:1125px;top:654.77px;font-size:12.7px;color:#ccccdc;-webkit-text-stroke:0.40px #ccccdc;">Retro LCD</div>
<div class="t" style="left:1214px;top:653.87px;font-size:13.3px;color:#a3a3af;">Basic</div>
<div class="a" style="left:32.7px;top:90.7px;width:37.6px;height:37.6px;border-radius:50%;background:#4b93db"></div>
<svg style="left:46.5px;top:100.5px;" width="11.5" height="17.5" viewBox="0 0 11.5 17.5"><path d="M10.6 1.4 H2.5 L1.9 8 C2.9 7.3 4.1 7 5.4 7 C8.5 7 10.4 8.8 10.4 11.5 C10.4 14.3 8.3 16.1 5.3 16.1 C3.6 16.1 2.2 15.7 1 15" fill="none" stroke="#1c1d21" stroke-width="2.35" stroke-linejoin="miter"/></svg>
<div class="a" style="left:1173.2px;top:76.7px;width:37.6px;height:37.6px;border-radius:50%;background:#4b93db"></div>
<svg style="left:1187px;top:86.5px;" width="7.5" height="17.5" viewBox="0 0 7.5 17.5"><path d="M6 17 V1.2 L0.9 4.6" fill="none" stroke="#1c1d21" stroke-width="2.35" stroke-linejoin="miter"/></svg>
<svg style="left:0;top:0" width="1347" height="684" viewBox="0 0 1347 684"><path d="M1162 96 L1112.5 95.5 M1129 80.5 L1112.5 95.5 L1128.6 110.4" fill="none" stroke="#0b7bd9" stroke-width="4.9" stroke-linecap="round" stroke-linejoin="round"/></svg>
<div class="a" style="left:1149.2px;top:230.2px;width:37.6px;height:37.6px;border-radius:50%;background:#4b93db"></div>
<svg style="left:1163px;top:240.5px;" width="11.5" height="17.5" viewBox="0 0 11.5 17.5"><path d="M10.6 1.4 H2.5 L1.9 8 C2.9 7.3 4.1 7 5.4 7 C8.5 7 10.4 8.8 10.4 11.5 C10.4 14.3 8.3 16.1 5.3 16.1 C3.6 16.1 2.2 15.7 1 15" fill="none" stroke="#1c1d21" stroke-width="2.35" stroke-linejoin="miter"/></svg>
<svg style="left:0;top:0" width="1347" height="684" viewBox="0 0 1347 684"><path d="M1138 249.5 L1077 249 M1094 234 L1077 249 L1093 264" fill="none" stroke="#0b7bd9" stroke-width="4.9" stroke-linecap="round" stroke-linejoin="round"/></svg>
<div class="a" style="left:262.7px;top:457.2px;width:37.6px;height:37.6px;border-radius:50%;background:#4b93db"></div>
<svg style="left:276px;top:467px;" width="11.5" height="17.5" viewBox="0 0 11.5 17.5"><path d="M1.1 2.3 C2.3 1.6 3.7 1.3 5.2 1.3 C8 1.3 9.8 2.7 9.8 4.8 C9.8 7 8 8.4 5 8.4 H3.8 M5 8.4 C8.6 8.4 10.4 10 10.4 12.4 C10.4 15 8.3 16.1 5.2 16.1 C3.5 16.1 2 15.7 0.9 15" fill="none" stroke="#1c1d21" stroke-width="2.35" stroke-linejoin="miter"/></svg>
<svg style="left:0;top:0" width="1347" height="684" viewBox="0 0 1347 684"><path d="M280.3 505 L279.3 541 M264 526 L279.3 542 L294.3 528.2" fill="none" stroke="#0b7bd9" stroke-width="4.9" stroke-linecap="round" stroke-linejoin="round"/></svg>
<div class="a" style="left:936.7px;top:601.5px;width:37.6px;height:37.6px;border-radius:50%;background:#4b93db"></div>
<svg style="left:950px;top:612px;" width="11.5" height="17.5" viewBox="0 0 11.5 17.5"><path d="M1.1 3.2 C2.2 1.9 3.6 1.3 5.4 1.3 C8.2 1.3 9.9 2.9 9.9 5.2 C9.9 7.6 8.4 9.3 5.4 11.9 L1.4 15.4 H10.9" fill="none" stroke="#1c1d21" stroke-width="2.35" stroke-linejoin="miter"/></svg>
<svg style="left:0;top:0" width="1347" height="684" viewBox="0 0 1347 684"><path d="M955.5 597 L955.9 552.3 M940.2 567.6 L955.9 552.3 L971.6 568" fill="none" stroke="#0b7bd9" stroke-width="4.9" stroke-linecap="round" stroke-linejoin="round"/></svg>
<div class="a" style="left:180.2px;top:587.5px;width:37.6px;height:37.6px;border-radius:50%;background:#4b93db"></div>
<svg style="left:192px;top:597.5px;" width="13" height="17.5" viewBox="0 0 13 17.5"><path d="M9.2 17 V1.5 H8.8 L1.3 11.8 V12.3 H12.8" fill="none" stroke="#1c1d21" stroke-width="2.35" stroke-linejoin="miter"/></svg>
<svg style="left:0;top:0" width="1347" height="684" viewBox="0 0 1347 684"><path d="M179.5 619.3 L118.5 617.8 M135.5 603.3 L118.5 617.8 L135.2 633.2" fill="none" stroke="#0b7bd9" stroke-width="4.9" stroke-linecap="round" stroke-linejoin="round"/></svg></body></html>
